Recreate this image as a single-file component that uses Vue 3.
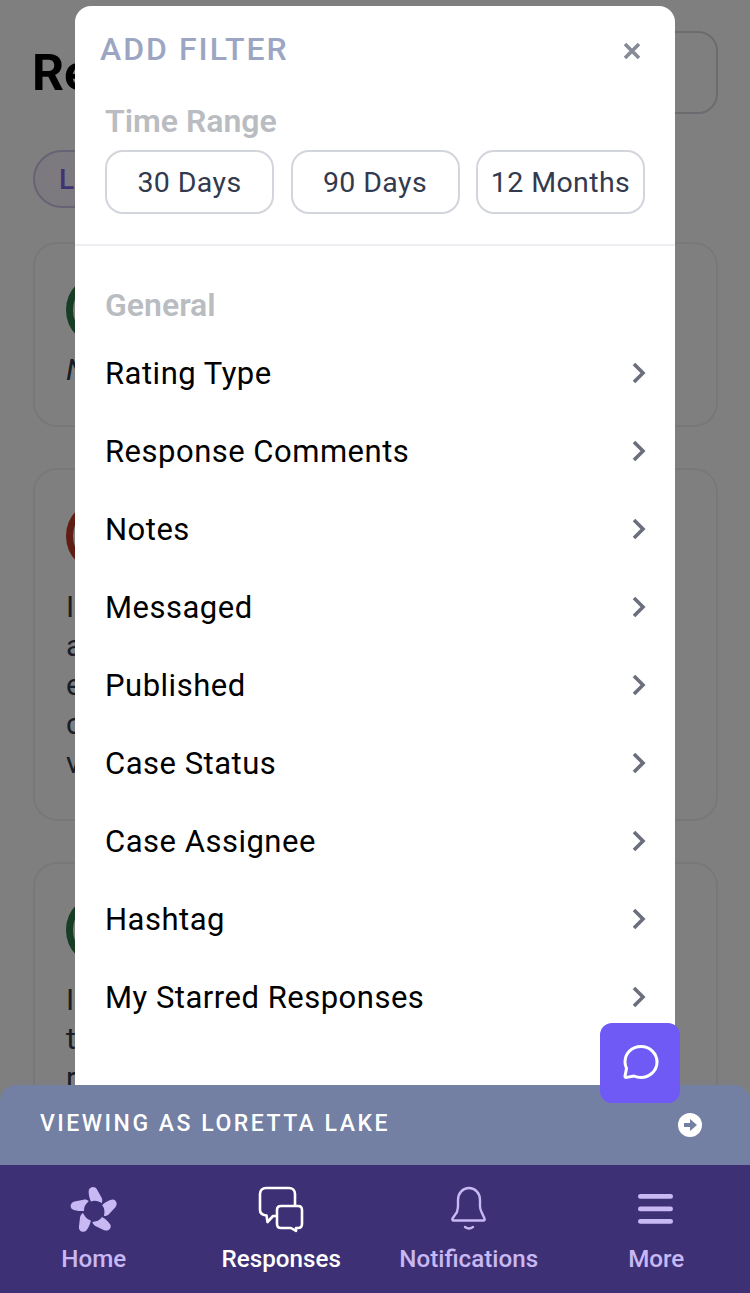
<script setup>
const ranges = ['30 Days', '90 Days', '12 Months']
const filters = ['Rating Type', 'Response Comments', 'Notes', 'Messaged', 'Published', 'Case Status', 'Case Assignee', 'Hashtag', 'My Starred Responses']
const petal = 'M20 3.500c1.500-3 6-3.500 8 0l4.500 8c1 2 1 4 .3 5.500l-3.300-1.500c-2.500-1-5-1-7.500 0-1.500-3-3-9-2-12z'
const angles = [0, 72, 144, 216, 288]
</script>

<template>
  <div class="page">
    <div class="content">
      <div class="head">
        <h1>Responses</h1>
        <div class="head-btn"></div>
      </div>
      <div class="chips"><span class="chip">Last 30 Days</span></div>
      <div class="card c1">
        <span class="avatar green"></span>
        <p class="italic">No comment provided</p>
      </div>
      <div class="card c2">
        <span class="avatar red"></span>
        <p>I<br>a<br>e<br>c<br>v</p>
      </div>
      <div class="card c3">
        <span class="avatar green"></span>
        <p>I<br>t<br>r</p>
      </div>
    </div>

    <div class="overlay"></div>

    <section class="modal">
      <header class="modal-head">
        <h2>ADD FILTER</h2>
        <svg class="close" width="20" height="20" viewBox="0 0 20 20">
          <path d="M3 3 17 17M17 3 3 17" stroke="#858a96" stroke-width="3.6" fill="none" />
        </svg>
      </header>
      <div class="range">
        <h3>Time Range</h3>
        <div class="range-row">
          <button v-for="r in ranges" :key="r">{{ r }}</button>
        </div>
      </div>
      <div class="general">
        <h3>General</h3>
        <div v-for="f in filters" :key="f" class="row">
          <span>{{ f }}</span>
          <svg width="16" height="24" viewBox="0 0 16 24">
            <path d="M3 3 12 12 3 21" stroke="#6b6f7b" stroke-width="3.600" fill="none" />
          </svg>
        </div>
      </div>
    </section>

    <footer class="bottom">
      <div class="viewing">
        <span>VIEWING AS LORETTA LAKE</span>
        <svg width="24" height="24" viewBox="0 0 24 24">
          <circle cx="12" cy="12" r="12" fill="#fff" />
          <path d="M6 10h6V6l7 6-7 6v-4H6z" fill="#7380a3" />
        </svg>
      </div>
      <nav class="nav">
        <div class="nav-item">
          <svg width="50" height="50" viewBox="0 0 50 50">
            <g fill="#c8b8f3" transform="translate(0 1)">
              <path v-for="a in angles" :key="a" :d="petal" :transform="`rotate(${a} 25 25)`" />
            </g>
          </svg>
          <span>Home</span>
        </div>
        <div class="nav-item active">
          <svg width="50" height="50" viewBox="0 0 50 50" fill="none" stroke="#fff" stroke-width="2.600" stroke-linejoin="round">
            <path d="M21 31h-4l-5.500 6-1-6.500C6 30 4 27.500 4 25V9c0-3.500 2.500-6 6-6h23c3.500 0 6 2.500 6 6v12" />
            <path d="M25 21h17c2.500 0 4 1.500 4 4v14c0 2.500-1.500 4-4 4h-2v3l-5-3H25c-2.500 0-4-1.500-4-4V25c0-2.500 1.500-4 4-4z" />
          </svg>
          <span>Responses</span>
        </div>
        <div class="nav-item">
          <svg width="50" height="50" viewBox="0 0 50 50" fill="none" stroke="#c8b8f3" stroke-width="2.400" stroke-linecap="round" stroke-linejoin="round">
            <path d="M13 27c0-1 1-3 1-6v-6c0-7 5-12 11-12s11 5 11 12v6c0 3 1 5 1.500 6l3 6.500c.5 1 0 2-1 2H9.500c-1 0-1.500-1-1-2z" />
            <path d="M21 42c2.500 1.800 5.500 1.800 8 0" />
          </svg>
          <span>Notifications</span>
        </div>
        <div class="nav-item">
          <svg width="50" height="50" viewBox="0 0 50 50" fill="#c8b8f3">
            <rect x="7" y="9" width="35" height="4.800" rx="2.400" />
            <rect x="7" y="21.500" width="35" height="4.800" rx="2.400" />
            <rect x="7" y="34" width="35" height="4.800" rx="2.400" />
          </svg>
          <span>More</span>
        </div>
      </nav>
    </footer>

    <button class="chat" aria-label="Chat">
      <svg width="40" height="40" viewBox="0 0 40 40" fill="none" stroke="#fff" stroke-width="3" stroke-linejoin="round">
        <path d="M21 3.500C12 3.500 5 10 5 19c0 2.500.8 4.800 1.500 6.500L5 33c-.2 1 .5 1.600 1.500 1.400l7.500-1.400c2 .9 4.500 1.500 7 1.500 9 0 16-7 16-15.500S30 3.500 21 3.500z" />
      </svg>
    </button>
  </div>
</template>

<style>
html, body { margin: 0; background: #808080; }
</style>

<style scoped>
.page {
  position: relative;
  width: 750px;
  height: 1293px;
  overflow: hidden;
  background: #fff;
  font-family: Roboto, "Liberation Sans", sans-serif;
}
.content { padding: 31px 32px 0 33px; }
.head { display: flex; justify-content: space-between; height: 83px; align-items: center; }
h1 { margin: 0 0 0 -1px; font-size: 50px; font-weight: 700; color: #000; }
.head-btn { box-sizing: border-box; width: 200px; height: 83px; border: 2px solid #d5d8de; border-radius: 20px; }
.chips { margin-top: 36px; height: 60px; }
.chip {
  display: inline-flex; align-items: center; height: 58px; box-sizing: border-box; padding: 0 24px;
  border: 2px solid #cfc6ea; border-radius: 30px; background: #f8f5fd;
  color: #7f66ea; font-size: 28px; font-weight: 500;
}
.card {
  box-sizing: border-box; border: 2px solid #f0f0f2; border-radius: 24px;
  padding: 30px 31px; margin-bottom: 41px; color: #333a4d; font-size: 30px; line-height: 39px;
}
.chips + .card { margin-top: 32px; }
.c1 { height: 185px; }
.c2 { height: 353px; }
.c3 { height: 400px; }
.avatar { display: block; width: 72px; height: 72px; box-sizing: border-box; border: 7px solid; border-radius: 50%; }
.green { border-color: #2f7a4a; }
.red { border-color: #bf3a26; }
.card p { margin: 14px 0 0; }
.c1 p { margin-top: 4px; }
.c2 p { margin-top: 15px; }
.italic { font-style: italic; }

.overlay { position: absolute; inset: 0; background: rgba(0, 0, 0, .5); }

.modal {
  position: absolute; left: 75px; top: 6px; width: 600px; height: 1120px;
  background: #fff; border-radius: 16px;
}
.modal-head { display: flex; justify-content: space-between; align-items: center; padding: 25px 33px 1px 25px; }
h2 { margin: 0; font-size: 32px; line-height: 36px; font-weight: 500; letter-spacing: 2px; color: #9ca6c2; }
.close { margin-top: 4px; }
h3 { margin: 0; font-size: 32px; line-height: 36px; font-weight: 600; color: #b9bcc1; }
.range { padding: 35px 30px 30px; border-bottom: 2px solid #eceef1; }
.range-row { display: flex; justify-content: space-between; margin-top: 11px; }
.range-row button {
  box-sizing: border-box; width: 169px; height: 64px; padding: 0;
  background: #fff; border: 2px solid #d3d5dc; border-radius: 18px;
  font: 400 28.5px Roboto, sans-serif; letter-spacing: .4px; color: #333a4d;
}
.general { padding: 41px 28px 0 30px; }
.general h3 { margin-bottom: 11px; }
.row { display: flex; justify-content: space-between; align-items: center; height: 78px; font-size: 31px; letter-spacing: .5px; color: #000; }

.bottom { position: absolute; left: 0; right: 0; bottom: 0; }
.viewing {
  display: flex; justify-content: space-between; align-items: center;
  height: 80px; box-sizing: border-box; padding: 0 48px 0 40px;
  background: #7380a3; border-radius: 16px 16px 0 0;
  color: #fff; font-size: 23px; font-weight: 500; letter-spacing: 2.500px;
}
.viewing span { margin-bottom: 4px; }
.nav { display: grid; grid-template-columns: repeat(4, 1fr); height: 128px; background: #3e3075; box-sizing: border-box; }
.nav-item { display: flex; flex-direction: column; align-items: center; padding-top: 20px; color: #c8b8f3; font-size: 24.2px; font-weight: 500; line-height: 28px; }
.nav-item svg { display: block; }
.nav-item span { margin-top: 10px; }
.nav-item.active { color: #fff; }
.chat {
  position: absolute; left: 600px; top: 1023px; width: 80px; height: 80px; padding: 0;
  display: flex; align-items: center; justify-content: center;
  background: #6f5af6; border: 0; border-radius: 12px;
}
</style>
